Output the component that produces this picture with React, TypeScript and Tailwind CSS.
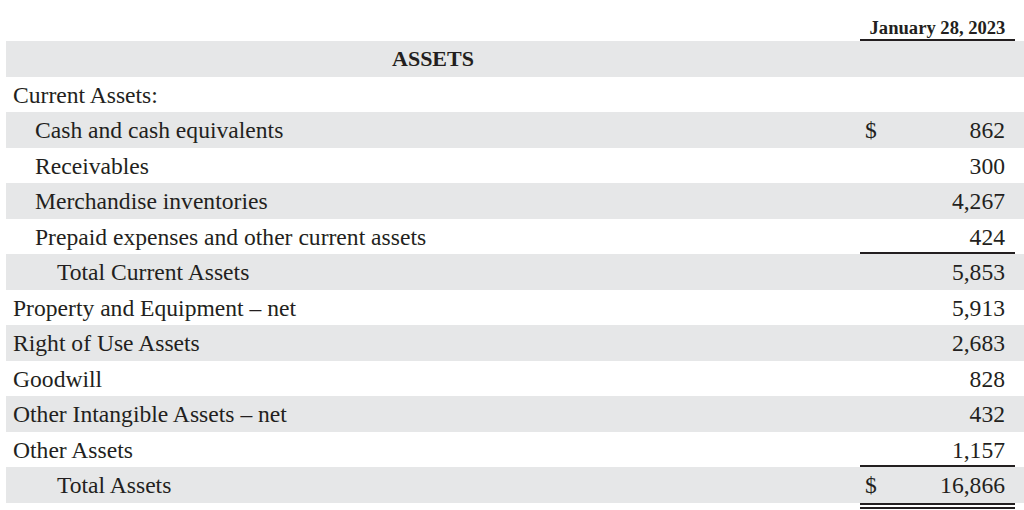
import React from "react";

type Row = {
  label: string;
  indent: 0 | 1 | 2;
  amount?: string;
  dollar?: boolean;
  lineBelow?: boolean;
};

const rows: Row[] = [
  { label: "Current Assets:", indent: 0 },
  { label: "Cash and cash equivalents", indent: 1, amount: "862", dollar: true },
  { label: "Receivables", indent: 1, amount: "300" },
  { label: "Merchandise inventories", indent: 1, amount: "4,267" },
  { label: "Prepaid expenses and other current assets", indent: 1, amount: "424", lineBelow: true },
  { label: "Total Current Assets", indent: 2, amount: "5,853" },
  { label: "Property and Equipment \u2013 net", indent: 0, amount: "5,913" },
  { label: "Right of Use Assets", indent: 0, amount: "2,683" },
  { label: "Goodwill", indent: 0, amount: "828" },
  { label: "Other Intangible Assets \u2013 net", indent: 0, amount: "432" },
  { label: "Other Assets", indent: 0, amount: "1,157", lineBelow: true },
  { label: "Total Assets", indent: 2, amount: "16,866", dollar: true },
];

const indentClass = ["pl-[7px]", "pl-[29px]", "pl-[51px]"];

export default function App() {
  return (
    <div
      className="w-[1024px] h-[510px] bg-white text-[#231f20] overflow-hidden"
      style={{ fontFamily: '"Liberation Serif", "Times New Roman", serif' }}
    >
      {/* Header */}
      <div className="flex h-[41px] pl-[860px]">
        <div className="w-[155px] h-[41px] pt-[17px] leading-[22px] text-[18.6px] font-bold text-center border-b-2 border-[#231f20]">
          January 28, 2023
        </div>
      </div>

      {/* ASSETS title row */}
      <div className="flex ml-[6px] h-[35.5px] bg-[#e6e7e8]">
        <div className="w-[854px] pt-[1.5px] leading-[31px] text-[22px] font-bold text-center">
          ASSETS
        </div>
      </div>

      {rows.map((r, i) => {
        const gray = i % 2 === 1;
        return (
          <div
            key={i}
            className={`flex ml-[6px] h-[35.5px] ${gray ? "bg-[#e6e7e8]" : "bg-white"}`}
          >
            <div
              className={`w-[854px] pt-[4px] leading-[29px] text-[23.6px] whitespace-nowrap ${indentClass[r.indent]}`}
            >
              {r.label}
            </div>
            <div
              className={`w-[155px] flex justify-between pl-[5px] pr-[10px] pt-[4px] leading-[29px] text-[23.6px] ${
                r.lineBelow ? "shadow-[inset_0_-2px_0_#231f20]" : ""
              }`}
            >
              <span>{r.dollar ? "$" : ""}</span>
              <span>{r.amount ?? ""}</span>
            </div>
          </div>
        );
      })}

      {/* Double underline */}
      <div className="ml-[860px] w-[155px] pt-[0.5px]">
        <div className="h-[2px] bg-[#231f20]" />
        <div className="h-[2px] mt-[1.5px] bg-[#231f20]" />
      </div>
    </div>
  );
}
